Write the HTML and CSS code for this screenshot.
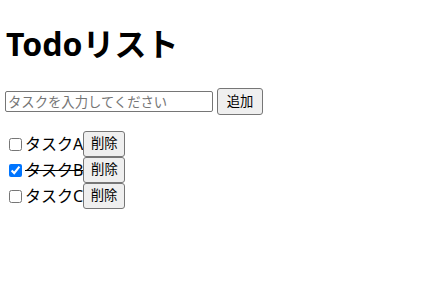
FILE: index.html
```html
<!DOCTYPE html>
<html lang="ja">
<head>
<meta charset="utf-8">
<title>Todo</title>
<link rel="stylesheet" href="styles.css">
</head>
<body>
<div class="app">
  <h1 class="title">Todoリスト</h1>
  <div class="add-row">
    <input class="task-input" type="text" placeholder="タスクを入力してください">
    <button class="btn btn-add">追加</button>
  </div>
  <ul class="todo-list">
    <li class="todo-item"><input class="check" type="checkbox"><span class="label">タスクA</span><button class="btn btn-del">削除</button></li>
    <li class="todo-item"><input class="check" type="checkbox" checked><span class="label done">タスクB</span><button class="btn btn-del">削除</button></li>
    <li class="todo-item"><input class="check" type="checkbox"><span class="label">タスクC</span><button class="btn btn-del">削除</button></li>
  </ul>
</div>
</body>
</html>
```
FILE: styles.css
```css
html, body {
  margin: 0;
  background: #fff;
}
body {
  font-family: "Noto Sans", "Noto Sans CJK JP", sans-serif;
  color: #000;
}
.app {
  padding: 0 5px;
}
.title {
  margin: 21px 0 22px;
  font-size: 32px;
  line-height: 45px;
  height: 45px;
  font-weight: bold;
  padding-left: 1px;
}
.add-row {
  display: flex;
  align-items: center;
  gap: 4px;
  height: 27px;
}
.task-input {
  box-sizing: border-box;
  width: 208px;
  height: 21px;
  margin: 0;
  padding: 1px 2px;
  border: 1px solid #767676;
  border-radius: 2px;
  font-family: "Noto Sans", "Noto Sans CJK JP", sans-serif;
  font-size: 13.33px;
}
.task-input::placeholder {
  color: #757575;
}
.btn {
  box-sizing: border-box;
  margin: 0;
  padding: 0;
  border: 1px solid #767676;
  border-radius: 3px;
  background: #efefef;
  color: #000;
  font-family: "Noto Sans", "Noto Sans CJK JP", sans-serif;
  font-size: 13.33px;
  line-height: 1;
}
.btn-add {
  width: 46px;
  height: 27px;
}
.todo-list {
  list-style: none;
  margin: 16px 0 0;
  padding: 0;
}
.todo-item {
  display: flex;
  align-items: center;
  height: 26px;
}
.check {
  margin: 3px 3px 3px 4px;
  width: 13px;
  height: 13px;
}
.label {
  font-size: 16px;
  line-height: 20px;
}
.done {
  text-decoration: line-through;
}
.btn-del {
  width: 42px;
  height: 26px;
}
```
